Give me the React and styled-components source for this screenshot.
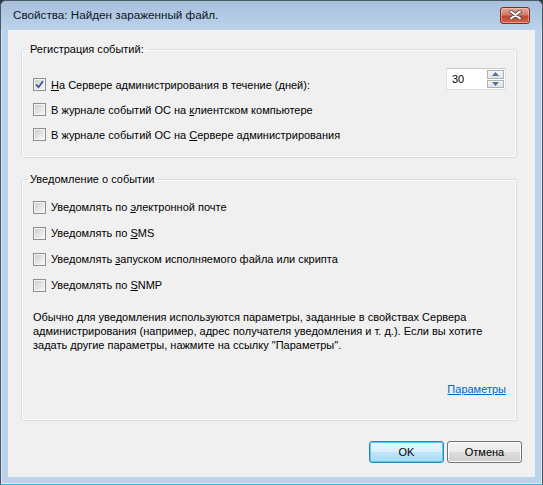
import React from "react";
import styled, { createGlobalStyle } from "styled-components";

const GlobalStyle = createGlobalStyle`
  html, body {
    margin: 0;
    padding: 0;
    background: #2f3a44;
  }
  body {
    font-family: "Liberation Sans", Arial, sans-serif;
    font-size: 11px;
    color: #000;
  }
`;

const Window = styled.div`
  width: 543px;
  height: 485px;
  box-sizing: border-box;
  display: flex;
  flex-direction: column;
  border: 1px solid #4a5866;
  border-bottom-color: #3db7d9;
  border-radius: 6px 6px 0 0;
  background: #bcd3ec;
  box-shadow: inset 0 0 0 1px #d9e7f6;
  overflow: hidden;
`;

const TitleBar = styled.div`
  height: 29px;
  flex: none;
  display: flex;
  align-items: center;
  justify-content: space-between;
  padding: 0 12px 0 12px;
  background: linear-gradient(#a7c0dc 0%, #b4cbe5 60%, #bcd3ec 100%);
  border-radius: 5px 5px 0 0;
`;

const Title = styled.div`
  font-size: 11.7px;
  color: #0c1624;
  padding-bottom: 2px;
`;

const CloseButton = styled.div`
  width: 30px;
  height: 17px;
  box-sizing: border-box;
  margin-top: -1px;
  display: flex;
  align-items: center;
  justify-content: center;
  border: 1px solid #7d2f23;
  border-radius: 3px;
  background: linear-gradient(#e7a89c 0%, #d47a68 45%, #c4442c 55%, #d1664f 100%);
  box-shadow: inset 0 0 0 1px rgba(255, 210, 200, 0.5);
`;

const Client = styled.div`
  flex: 1;
  margin: 0 7px 7px 7px;
  background: #f0f0f0;
  display: flex;
  flex-direction: column;
  padding: 13px 13px 14px 13px;
  box-sizing: border-box;
`;

const Group = styled.fieldset`
  margin: ${(p) => p.$top}px 5px 0 0;
  padding: ${(p) => p.$padTop}px 10px ${(p) => p.$padBottom}px 11px;
  border: 1px solid #d5dfe5;
  border-radius: 3px;
  display: flex;
  flex-direction: column;
  box-shadow: inset 0 0 0 1px #fff;
`;

const Legend = styled.legend`
  padding: 0 2px;
  margin-left: -5px;
  line-height: 13px;
`;

const Row = styled.div`
  height: ${(p) => p.$h || 25}px;
  display: flex;
  align-items: center;
  justify-content: space-between;
`;

const CheckLabel = styled.label`
  display: flex;
  align-items: center;
  gap: 5px;
  white-space: nowrap;
`;

const Box = styled.span`
  width: 13px;
  height: 13px;
  box-sizing: border-box;
  border: 1px solid #8e8f8f;
  padding: 1px;
  background: #f4f4f4;
  display: flex;
`;

const BoxInner = styled.span`
  flex: 1;
  display: flex;
  align-items: center;
  justify-content: center;
  background: linear-gradient(135deg, #c9cdd3 0%, #e4e5e7 55%, #f7f7f7 100%);
`;

const Key = styled.span`
  text-decoration: underline;
`;

const Spin = styled.div`
  align-self: flex-start;
  margin-top: -4px;
  width: 60px;
  height: 22px;
  box-sizing: border-box;
  display: flex;
  align-items: stretch;
  background: #fff;
  border: 1px solid #dbdfe6;
  border-top-color: #c4c8cf;
  padding: 1px 1px 1px 5px;
`;

const SpinValue = styled.div`
  flex: 1;
  display: flex;
  align-items: center;
  padding-bottom: 1px;
`;

const SpinButtons = styled.div`
  width: 17px;
  display: flex;
  flex-direction: column;
  gap: 1px;
`;

const SpinButton = styled.div`
  flex: 1;
  box-sizing: border-box;
  border: 1px solid #b2b2b2;
  background: linear-gradient(#f6f6f6, #e2e2e2);
  display: flex;
  align-items: center;
  justify-content: center;
`;

const Note = styled.p`
  margin: 12px 0 0 0;
  line-height: 14px;
  white-space: nowrap;
`;

const LinkRow = styled.div`
  margin-top: 30px;
  display: flex;
  justify-content: flex-end;
  line-height: 14px;
`;

const Link = styled.a`
  color: #0066cc;
  text-decoration: underline;
  cursor: pointer;
`;

const Buttons = styled.div`
  margin-top: auto;
  display: flex;
  justify-content: flex-end;
  gap: 3px;
`;

const Button = styled.button`
  width: 75px;
  height: 22px;
  box-sizing: border-box;
  font: inherit;
  color: #000;
  border-radius: 3px;
  border: 1px solid ${(p) => (p.$primary ? "#3c7fb1" : "#707070")};
  background: ${(p) =>
    p.$primary
      ? "linear-gradient(#eaf6fd 0%, #d9f0fc 50%, #bee6fd 51%, #a7d9f5 100%)"
      : "linear-gradient(#f2f2f2 0%, #ebebeb 50%, #dddddd 51%, #cfcfcf 100%)"};
  box-shadow: inset 0 0 0 1px ${(p) => (p.$primary ? "#48d2fa" : "#fcfcfc")};
  padding: 0;
`;

function Checkbox({ checked, children }) {
  return (
    <CheckLabel>
      <Box>
        <BoxInner>
          {checked && (
            <svg width="9" height="9" viewBox="0 0 9 9">
              <path d="M1 4.5 L3.5 7.2 L8 1.2" fill="none" stroke="#3a519b" strokeWidth="1.7" />
            </svg>
          )}
        </BoxInner>
      </Box>
      <span>{children}</span>
    </CheckLabel>
  );
}

function Arrow({ down }) {
  return (
    <svg width="7" height="4" viewBox="0 0 7 4">
      <path d={down ? "M0 0 H7 L3.5 4 Z" : "M0 4 H7 L3.5 0 Z"} fill="#4f6fa8" />
    </svg>
  );
}

export default function App() {
  return (
    <>
      <GlobalStyle />
      <Window>
        <TitleBar>
          <Title>Свойства: Найден зараженный файл.</Title>
          <CloseButton>
            <svg width="13" height="10" viewBox="0 0 13 10">
              <path d="M2 1.5 L11 8.5 M11 1.5 L2 8.5" stroke="#5b4a48" strokeWidth="3.6" strokeLinecap="round" />
              <path d="M2 1.5 L11 8.5 M11 1.5 L2 8.5" stroke="#fff" strokeWidth="2" strokeLinecap="round" />
            </svg>
          </CloseButton>
        </TitleBar>
        <Client>
          <Group $top={0} $padTop={16} $padBottom={10}>
            <Legend>Регистрация событий:</Legend>
            <Row>
              <Checkbox checked>
                <Key>Н</Key>а Сервере администрирования в течение (дней):
              </Checkbox>
              <Spin>
                <SpinValue>30</SpinValue>
                <SpinButtons>
                  <SpinButton>
                    <Arrow />
                  </SpinButton>
                  <SpinButton>
                    <Arrow down />
                  </SpinButton>
                </SpinButtons>
              </Spin>
            </Row>
            <Row>
              <Checkbox>
                В журнале событий ОС на <Key>к</Key>лиентском компьютере
              </Checkbox>
            </Row>
            <Row>
              <Checkbox>
                В журнале событий ОС на <Key>С</Key>ервере администрирования
              </Checkbox>
            </Row>
          </Group>

          <Group $top={15} $padTop={8} $padBottom={24}>
            <Legend>Уведомление о событии</Legend>
            <Row $h={26}>
              <Checkbox>
                Уведомлять по <Key>э</Key>лектронной почте
              </Checkbox>
            </Row>
            <Row $h={26}>
              <Checkbox>
                Уведомлять по <Key>S</Key>MS
              </Checkbox>
            </Row>
            <Row $h={26}>
              <Checkbox>
                Уведомлять <Key>з</Key>апуском исполняемого файла или скрипта
              </Checkbox>
            </Row>
            <Row $h={26}>
              <Checkbox>
                Уведомлять по <Key>S</Key>NMP
              </Checkbox>
            </Row>
            <Note>
              Обычно для уведомления используются параметры, заданные в свойствах Сервера
              <br />
              администрирования (например, адрес получателя уведомления и т. д.). Если вы хотите
              <br />
              задать другие параметры, нажмите на ссылку "Параметры".
            </Note>
            <LinkRow>
              <Link>Параметры</Link>
            </LinkRow>
          </Group>

          <Buttons>
            <Button $primary>OK</Button>
            <Button>Отмена</Button>
          </Buttons>
        </Client>
      </Window>
    </>
  );
}
